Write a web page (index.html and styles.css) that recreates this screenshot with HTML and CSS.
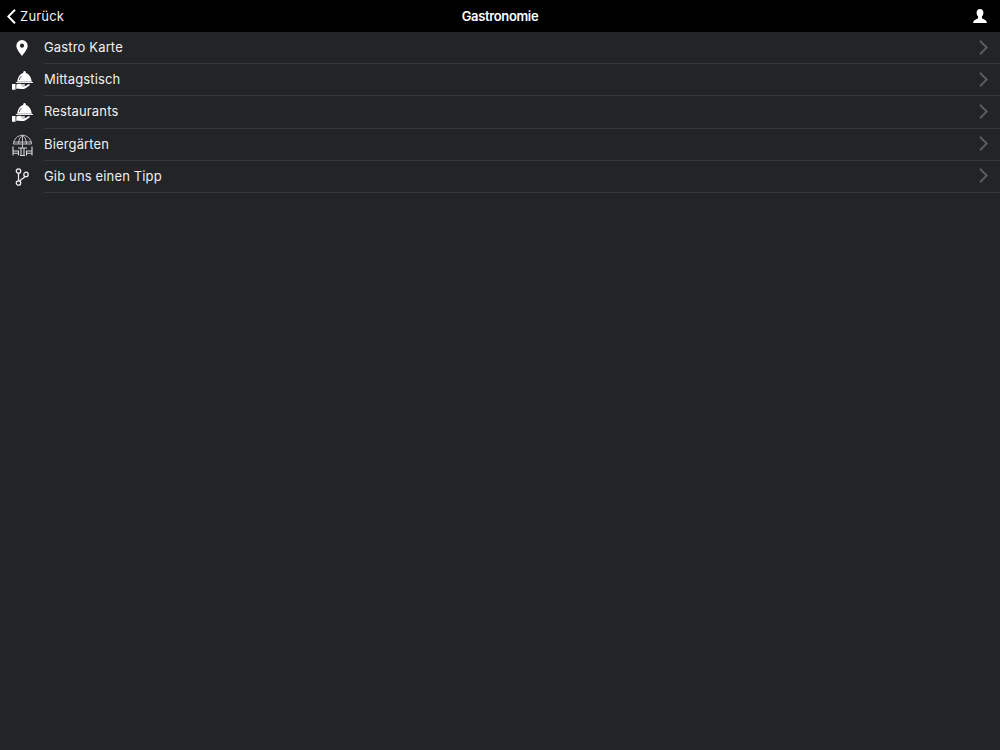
FILE: index.html
```html
<!DOCTYPE html>
<html lang="de">
<head>
<meta charset="utf-8">
<title>Gastronomie</title>
<link rel="stylesheet" href="styles.css">
</head>
<body>
<svg class="defs" width="0" height="0" aria-hidden="true">
  <defs>
    <symbol id="chev" viewBox="0 0 9 15"><path d="M1 .8 7.700 7.500 1 14.200" fill="none" stroke="currentColor" stroke-width="2"/></symbol>
    <symbol id="cloche" viewBox="0 0 22 19">
      <circle cx="13.500" cy="1.300" r="1.200" fill="#fff"/>
      <path d="M13.500 1.800c3.800 0 6.500 3.800 7.300 8.900H6.200c.8-5.100 3.500-8.900 7.300-8.900z" fill="#fff"/>
      <path d="M8.300 9c.3-1.700 1-3 2-4" fill="none" stroke="#232428" stroke-width=".7"/>
      <path d="M4.800 11.100h17.400v.9H4.800z" fill="#fff"/>
      <path d="M1 13h3.500v5.700H1zM5.300 13.600c1.600-.9 3.300-1 4.800-.4h3.200c1.100.1 1.100 1.500 0 1.600h-2.500v.4h3l3.700-2c1-.4 1.700.6 1 1.200l-4.300 3.100c-1.800.8-4.200.6-6 .3H5.300z" fill="#fff"/>
    </symbol>
    <symbol id="garden" viewBox="0 0 21 22">
      <g fill="none" stroke="#cfcfcf" stroke-width=".9">
        <path d="M1.500 10C1.800 4.800 5.800 1.300 10.500 1.300s8.700 3.500 9 8.700zM1.500 8h18M10.500 1.300C8 3 6.800 5.500 6.500 10M10.500 1.300c2.500 1.700 3.700 4.200 4 8.700M10.500 1.300V14"/>
      </g>
      <g fill="none" stroke="#d8d8d8" stroke-width="1.100">
        <path d="M1 12.500v9M20 12.500v9M1 17h5.500v4.500M20 17h-5.500v4.500M1 19.300h5.500M20 19.300h-5.500"/>
        <path d="M6 14h9M9 14v7.500M12 14v7.500M8 21.500h5"/>
      </g>
    </symbol>
    <symbol id="branch" viewBox="0 0 16 20">
      <g fill="none" stroke="#f0f0f0" stroke-width="1.300">
        <circle cx="4.500" cy="4" r="2.200"/><circle cx="12" cy="7.400" r="2.200"/><circle cx="4.500" cy="16" r="2.200"/>
        <path d="M4.500 6.200v7.600M11 9.400C10 11.300 7.300 12 5.600 14.100"/>
      </g>
    </symbol>
  </defs>
</svg>
<header class="nav">
  <a class="back">
    <svg class="back-chev" width="9" height="15"><use href="#chev"/></svg>
    <span>Zurück</span>
  </a>
  <h1 class="title">Gastronomie</h1>
  <svg class="user" width="14" height="14" viewBox="0 0 14 14"><path d="M7 0c2.200 0 3.400 1.500 3.400 3.700 0 1.500-.6 3-1.500 3.800v1.300c0 .8 1 1.200 2.300 1.700 1.300.5 2.300 1 2.800 3.500H0c.5-2.500 1.500-3 2.800-3.500 1.300-.5 2.300-.9 2.300-1.700V7.500c-.9-.8-1.500-2.300-1.500-3.800C3.600 1.500 4.800 0 7 0z" fill="#fff"/></svg>
</header>
<ul class="list">
  <li class="row">
    <span class="ico"><svg width="12" height="16" viewBox="0 0 12 17"><path fill-rule="evenodd" d="M6 0a6 6 0 0 1 6 6c0 3.500-3.500 7.500-6 11C3.500 13.500 0 9.500 0 6a6 6 0 0 1 6-6zm0 3.800a2.200 2.200 0 1 0 0 4.400 2.200 2.200 0 0 0 0-4.400z" fill="#fff"/></svg></span>
    <span class="cell"><span>Gastro Karte</span><svg class="chev" width="9" height="15"><use href="#chev"/></svg></span>
  </li>
  <li class="row">
    <span class="ico"><svg width="22" height="19"><use href="#cloche"/></svg></span>
    <span class="cell"><span>Mittagstisch</span><svg class="chev" width="9" height="15"><use href="#chev"/></svg></span>
  </li>
  <li class="row">
    <span class="ico"><svg width="22" height="19"><use href="#cloche"/></svg></span>
    <span class="cell"><span>Restaurants</span><svg class="chev" width="9" height="15"><use href="#chev"/></svg></span>
  </li>
  <li class="row">
    <span class="ico"><svg width="21" height="22"><use href="#garden"/></svg></span>
    <span class="cell"><span>Biergärten</span><svg class="chev" width="9" height="15"><use href="#chev"/></svg></span>
  </li>
  <li class="row">
    <span class="ico"><svg width="16" height="20"><use href="#branch"/></svg></span>
    <span class="cell"><span>Gib uns einen Tipp</span><svg class="chev" width="9" height="15"><use href="#chev"/></svg></span>
  </li>
</ul>
</body>
</html>
```
FILE: styles.css
```css
* { box-sizing: border-box; }
html, body { height: 100%; }
body {
  margin: 0;
  background: #232428;
  color: #fff;
  font-family: Inter, "Liberation Sans", sans-serif;
  overflow: hidden;
}
.defs { display: block; height: 0; }
.nav {
  height: 32px;
  background: #000;
  display: flex;
  align-items: center;
  justify-content: space-between;
  padding: 0 13px 0 7px;
  position: relative;
}
.back {
  display: flex;
  align-items: center;
  gap: 4px;
  font-size: 13px;
  letter-spacing: 0.2px;
  color: #f2f2f2;
}
.title {
  position: absolute;
  left: 0;
  right: 0;
  margin: 0;
  text-align: center;
  font-size: 13px;
  font-weight: 600;
  letter-spacing: -0.35px;
  pointer-events: none;
}
.user { display: block; }
.back-chev { transform: scaleX(-1); color: #fff; }
.list { list-style: none; margin: 0; padding: 0; }
.row { display: flex; height: 32.2px; }
.ico {
  width: 44px;
  flex: none;
  display: flex;
  align-items: center;
  justify-content: center;
}
.cell {
  flex: 1;
  display: flex;
  align-items: center;
  justify-content: space-between;
  padding: 0 12px 1px 0;
  border-bottom: 1px solid #37383c;
  font-size: 13px;
  letter-spacing: 0.15px;
  color: #f0f0f0;
}
.chev { color: #5c5d60; }
```
